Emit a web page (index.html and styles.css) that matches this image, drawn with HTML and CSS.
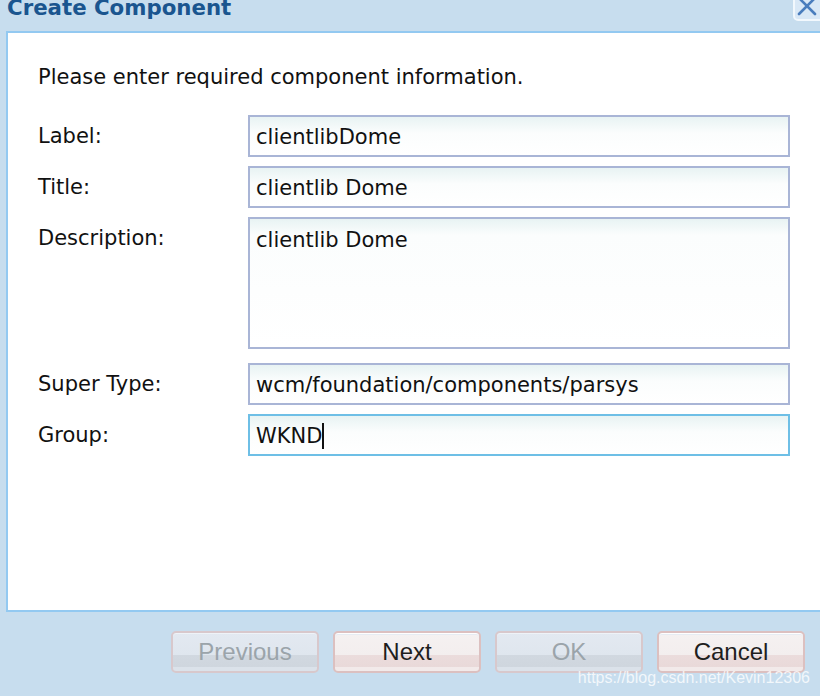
FILE: index.html
```html
<!DOCTYPE html>
<html>
<head>
<meta charset="utf-8">
<link rel="stylesheet" href="styles.css">
</head>
<body>
<div class="dialog">
  <div class="header">
    <div class="title">Create Component</div>
    <div class="close">
      <svg width="30" height="26" viewBox="0 0 30 26">
        <rect x="1" y="-6" width="30" height="26" rx="4" fill="#d9e8f6" stroke="#f2f8fd" stroke-width="2"/>
        <path d="M6 -2 L22 14 M22 -2 L6 14" stroke="#4a7dbd" stroke-width="2.6" stroke-linecap="round"/>
      </svg>
    </div>
  </div>
  <div class="panel">
    <p class="intro">Please enter required component information.</p>
    <div class="form">
      <label class="lbl">Label:</label>
      <input class="field" type="text" value="clientlibDome">
      <label class="lbl">Title:</label>
      <input class="field" type="text" value="clientlib Dome">
      <label class="lbl">Description:</label>
      <textarea class="field area">clientlib Dome</textarea>
      <label class="lbl">Super Type:</label>
      <input class="field" type="text" value="wcm/foundation/components/parsys">
      <label class="lbl">Group:</label>
      <div class="field focused">WKND<span class="caret"></span></div>
    </div>
  </div>
  <div class="footer">
    <button class="btn disabled">Previous</button>
    <button class="btn">Next</button>
    <button class="btn disabled">OK</button>
    <button class="btn">Cancel</button>
    <span class="watermark">https://blog.csdn.net/Kevin12306</span>
  </div>
</div>
</body>
</html>
```

FILE: styles.css
```css
html, body {
  margin: 0;
  padding: 0;
}
body {
  width: 820px;
  height: 696px;
  overflow: hidden;
  background: #c7ddee;
  font-family: "DejaVu Sans", Verdana, sans-serif;
}
.dialog {
  position: relative;
  width: 820px;
  height: 696px;
  display: flex;
  flex-direction: column;
}
.header {
  height: 31px;
  flex: none;
  display: flex;
  justify-content: space-between;
  align-items: flex-start;
  padding-left: 7px;
}
.title {
  font-weight: bold;
  font-size: 21.3px;
  line-height: 22px;
  margin-top: -3px;
  color: #1a558f;
}
.close {
  width: 30px;
  height: 21px;
  overflow: hidden;
  margin-right: -3px;
}
.close svg {
  display: block;
}
.panel {
  flex: none;
  margin-left: 6px;
  height: 581px;
  box-sizing: border-box;
  border: 2px solid #93c9f1;
  border-right: none;
  background: #fff;
  padding: 32px 0 0 30px;
}
.intro {
  margin: 0 0 26px 0;
  font-size: 21px;
  line-height: 24px;
  color: #111;
}
.form {
  display: grid;
  grid-template-columns: 210px 542px;
  row-gap: 9px;
}
.lbl {
  font-size: 21px;
  line-height: 42px;
  color: #111;
  align-self: start;
}
.field {
  box-sizing: border-box;
  width: 542px;
  height: 42px;
  margin: 0;
  border: 2px solid #a9b5d6;
  padding: 1px 6px 0 6px;
  font-family: "DejaVu Sans", Verdana, sans-serif;
  font-size: 21px;
  line-height: 38px;
  color: #111;
  background: linear-gradient(to bottom, #e8f3f3 0, #fbfdfd 16px, #ffffff 100%);
  outline: none;
  border-radius: 0;
}
.area {
  height: 132px;
  resize: none;
  padding-top: 8px;
  line-height: 26px;
  margin-bottom: 5px;
  overflow: hidden;
}
.focused {
  border-color: #6ebfe6;
  display: flex;
  align-items: center;
}
.caret {
  display: inline-block;
  width: 2px;
  height: 26px;
  background: #111;
}
.footer {
  flex: 1;
  display: flex;
  justify-content: flex-end;
  align-items: flex-start;
  gap: 14px;
  padding: 19px 15px 0 0;
}
.btn {
  box-sizing: border-box;
  width: 148px;
  height: 42px;
  border: 2px solid #dcc0c0;
  border-radius: 5px;
  font-family: "Liberation Sans", Arial, sans-serif;
  font-size: 24px;
  color: #1e1e1e;
  padding: 0;
  background: linear-gradient(to bottom, #f5f1f1 0, #f3eeee 58%, #ebdcdc 58%, #e9d9d9 90%, #f2eaea 90%, #f2eaea 100%);
  box-shadow: inset 0 1px 0 #fff, inset 0 2px 0 #e6ecf3;
}
.btn.disabled {
  color: #9ba4aa;
  border-color: #d8c8cc;
  background: linear-gradient(to bottom, #e3e9f1 0, #dfe6ee 58%, #d1d8e0 58%, #cfd6de 90%, #dbe2ea 90%, #dbe2ea 100%);
  box-shadow: inset 0 1px 0 #eef3f8;
}
.watermark {
  position: absolute;
  right: 10px;
  top: 669px;
  font-family: "Liberation Sans", Arial, sans-serif;
  font-size: 16px;
  line-height: 18px;
  color: rgba(255, 255, 255, 0.78);
}
```
